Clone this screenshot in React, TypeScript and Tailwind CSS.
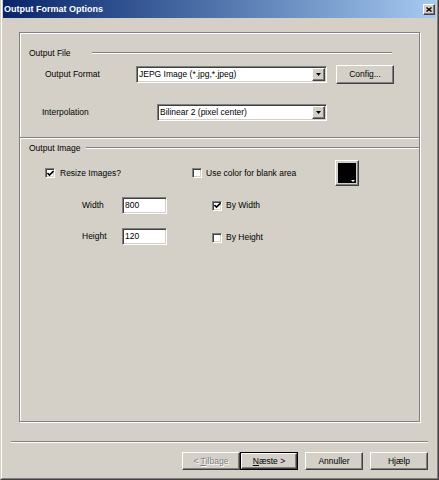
import React from 'react'

// Win2000 style bevels
const RAISED =
  'border border-t-white border-l-white border-r-[#404040] border-b-[#404040] shadow-[inset_-1px_-1px_0_#808080] bg-[#d4d0c8]'
const SUNKEN =
  'border border-t-[#808080] border-l-[#808080] border-r-white border-b-white shadow-[inset_1px_1px_0_#404040,inset_-1px_-1px_0_#d4d0c8]'

function Etched({ className = '' }: { className?: string }) {
  return <div className={`h-[2px] border-t border-t-[#808080] border-b border-b-white ${className}`} />
}

function Check({ checked }: { checked?: boolean }) {
  return (
    <div className={`w-[10px] h-[10px] shrink-0 bg-white flex items-center justify-center ${SUNKEN}`}>
      {checked && (
        <svg width="7" height="7" viewBox="0 0 7 7">
          <path d="M0.5 3 L2.5 5 L6.5 1" fill="none" stroke="black" strokeWidth="1.6" />
        </svg>
      )}
    </div>
  )
}

function Arrow() {
  return (
    <svg width="5" height="3" viewBox="0 0 5 3">
      <path d="M0 0 H5 L2.5 3 Z" fill="black" />
    </svg>
  )
}

function Select({ value, width }: { value: string; width: string }) {
  return (
    <div className={`flex items-center h-[17px] bg-white ${SUNKEN} ${width}`}>
      <span className="flex-1 pl-[2px] whitespace-nowrap overflow-hidden">{value}</span>
      <div className={`w-[13px] h-[13px] mr-[1px] flex items-center justify-center ${RAISED}`}>
        <Arrow />
      </div>
    </div>
  )
}

function TextBox({ value }: { value: string }) {
  return (
    <div className={`w-[45px] h-[17px] bg-white flex items-center pl-[2px] ${SUNKEN}`}>{value}</div>
  )
}

function Button({
  children,
  isDefault,
  disabled,
}: {
  children: React.ReactNode
  isDefault?: boolean
  disabled?: boolean
}) {
  const inner = (
    <div
      className={`w-full h-full flex items-center justify-center ${RAISED} ${
        disabled ? 'text-[#808080] [text-shadow:1px_1px_0_#fff]' : ''
      }`}
    >
      {children}
    </div>
  )
  if (isDefault) {
    return <div className="w-[58px] h-[18px] border border-black">{inner}</div>
  }
  return <div className="w-[58px] h-[18px]">{inner}</div>
}

export default function App() {
  return (
    <div className="w-[439px] h-[480px] bg-[#d4d0c8] border-l border-l-[#d4d0c8] border-r border-r-[#404040] border-b border-b-[#404040] font-['Liberation_Sans',Arial,sans-serif] text-[8.5px] text-black leading-none select-none">
      <div className="h-full flex flex-col border-l border-l-white border-r border-r-[#808080] border-b border-b-[#808080] px-[1px] pb-[1px]">
        {/* title bar */}
        <div className="h-[18px] shrink-0 flex items-center pl-[1px] pr-[1px] bg-gradient-to-r from-[#0a246a] to-[#a6caf0]">
          <span className="flex-1 text-white font-bold text-[9px]">Output Format Options</span>
          <div className={`w-[12px] h-[11px] flex items-center justify-center ${RAISED}`}>
            <svg width="6" height="5" viewBox="0 0 6 5">
              <path d="M0.5 0.5 L5.5 4.5 M5.5 0.5 L0.5 4.5" stroke="black" strokeWidth="1.4" />
            </svg>
          </div>
        </div>

        {/* main panel */}
        <div className="mt-[14px] ml-[16px] w-[401px] h-[390px] shrink-0 flex flex-col border border-[#808080] shadow-[1px_1px_0_#fff,inset_1px_1px_0_#fff]">
          {/* Output File */}
          <div className="mt-[14px] h-[12px] flex items-center pl-[9px] pr-[27px]">
            <span className="w-[63px] shrink-0">Output File</span>
            <Etched className="flex-1" />
          </div>

          <div className="mt-[6px] h-[19px] flex items-center pl-[25px]">
            <span className="w-[91px] shrink-0">Output Format</span>
            <Select value="JEPG Image (*.jpg,*.jpeg)" width="w-[191px]" />
            <div className="ml-[9px] w-[58px] h-[19px]">
              <div className={`w-full h-full flex items-center justify-center ${RAISED}`}>Config...</div>
            </div>
          </div>

          <div className="mt-[20px] h-[17px] flex items-center pl-[22px]">
            <span className="w-[115px] shrink-0">Interpolation</span>
            <Select value="Bilinear 2 (pixel center)" width="w-[170px]" />
          </div>

          <Etched className="mt-[16px]" />

          {/* Output Image */}
          <div className="mt-[3px] h-[12px] flex items-center pl-[9px]">
            <span className="w-[57px] shrink-0">Output Image</span>
            <Etched className="flex-1" />
          </div>

          <div className="mt-[6px] h-[26px] flex items-center pl-[25px]">
            <div className="w-[147px] flex items-center gap-[5px]">
              <Check checked />
              <span>Resize Images?</span>
            </div>
            <div className="w-[143px] flex items-center gap-[4px]">
              <Check />
              <span>Use color for blank area</span>
            </div>
            <div className={`relative w-[24px] h-[26px] p-[2px] ${RAISED}`}>
              <div className="w-full h-full bg-black" />
              <svg className="absolute right-[3px] bottom-[3px]" width="4" height="2" viewBox="0 0 4 2">
                <path d="M0 0 H4 L2 2 Z" fill="white" />
              </svg>
            </div>
          </div>

          <div className="mt-[11px] h-[17px] flex items-center pl-[62px]">
            <span className="w-[40px] shrink-0">Width</span>
            <TextBox value="800" />
            <div className="ml-[45px] flex items-center gap-[4px]">
              <Check checked />
              <span>By Width</span>
            </div>
          </div>

          <div className="mt-[14px] h-[17px] flex items-center pl-[62px]">
            <span className="w-[40px] shrink-0">Height</span>
            <TextBox value="120" />
            <div className="ml-[45px] flex items-center gap-[4px] translate-y-[1px]">
              <Check />
              <span>By Height</span>
            </div>
          </div>
        </div>

        {/* bottom separator */}
        <Etched className="mt-[19px] ml-[8px] w-[417px]" />

        {/* buttons */}
        <div className="mt-[9px] flex justify-end pr-[8px]">
          <Button disabled>
            &lt; <span className="underline ml-[2px]">T</span>ilbage
          </Button>
          <Button isDefault>
            <span className="underline">N</span>æste &gt;
          </Button>
          <div className="w-[7px]" />
          <Button>Annuller</Button>
          <div className="w-[7px]" />
          <Button>Hjælp</Button>
        </div>
      </div>
    </div>
  )
}
